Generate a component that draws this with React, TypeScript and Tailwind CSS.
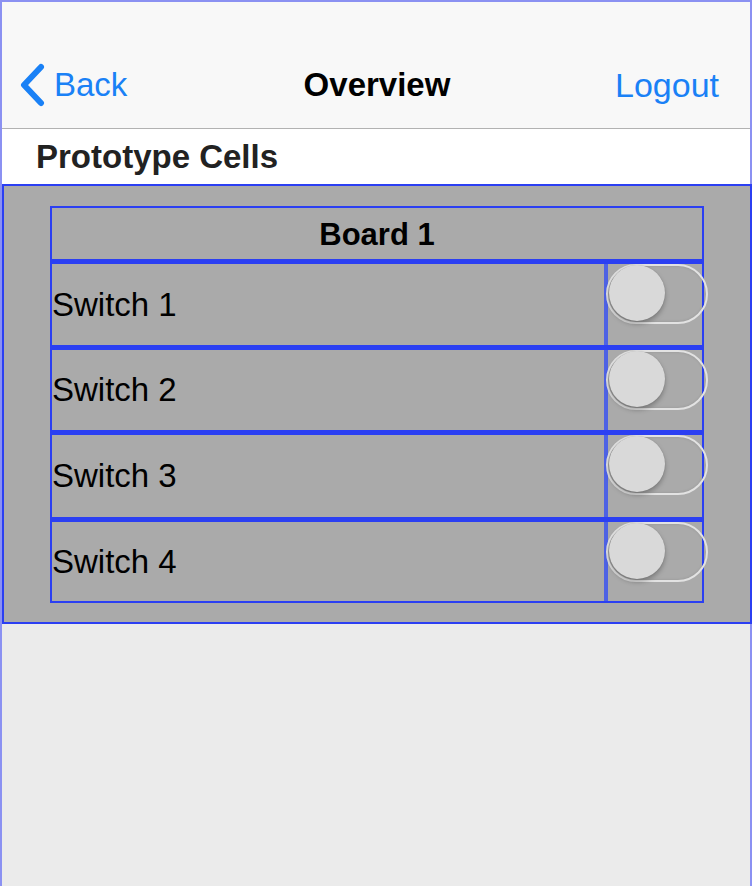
import React from 'react'

const switches = [
  { name: 'Switch 1', h: 'h-[86px]' },
  { name: 'Switch 2', h: 'h-[85px]' },
  { name: 'Switch 3', h: 'h-[87px]' },
  { name: 'Switch 4', h: 'h-[84px]' },
]

function Toggle() {
  return (
    <div className="absolute left-[-2px] top-0 w-[102px] h-[60px] rounded-full border-2 border-[#e2e2e2] shadow-[inset_0_0_3px_rgba(0,0,0,0.12)]">
      <div className="absolute left-[1px] top-[-1px] w-[56px] h-[56px] rounded-full bg-[#d9d9d9] shadow-[0_3px_5px_rgba(0,0,0,0.28),0_0_1px_rgba(0,0,0,0.2)]" />
    </div>
  )
}

export default function App() {
  return (
    <div
      className="w-[752px] min-h-[886px] flex flex-col border-t-2 border-x-2 border-[#8b91f2] bg-[#ebebeb]"
      style={{ fontFamily: '"Liberation Sans", Arial, sans-serif' }}
    >
      {/* nav bar */}
      <header className="bg-[#f8f8f8] pt-[40px] border-b border-[#b2b2b2]">
        <div className="h-[86px] grid grid-cols-[1fr_auto_1fr] items-center pl-[18px] pr-[30px]">
          <button className="justify-self-start flex items-center gap-[8px] text-[#1a81f6] text-[33px]">
            <svg width="26" height="44" viewBox="0 0 26 44" fill="none">
              <path d="M21 4 L4 22 L21 40" stroke="#1a81f6" strokeWidth="6" strokeLinecap="round" strokeLinejoin="round" />
            </svg>
            <span>Back</span>
          </button>
          <h1 className="font-bold text-[33px] text-black ml-[14px]">Overview</h1>
          <button className="justify-self-end text-[#1a81f6] text-[34px] mr-[1px]">Logout</button>
        </div>
      </header>

      <div className="bg-white h-[55px] flex items-center px-[34px]">
        <h2 className="font-bold text-[33px] text-[#222]">Prototype Cells</h2>
      </div>

      {/* prototype panel */}
      <section className="bg-[#aaaaaa] border-2 border-[#2b3ff2] -mr-[2px] px-[46px] pt-[20px] pb-[19px]">
        <div className="border-2 border-[#2b3ff2]">
          <div className="h-[51px] pt-[3px] flex items-center justify-center font-bold text-[31px] text-black">
            Board 1
          </div>
          {switches.map((s) => (
            <div key={s.name} className={'border-t-[5px] border-[#2b3ff2] flex ' + s.h}>
              <div className="flex-1 flex items-center text-[33px] text-black">{s.name}</div>
              <div className="relative w-[98px] border-l-4 border-[#4e62e4]">
                <Toggle />
              </div>
            </div>
          ))}
        </div>
      </section>

      <div className="flex-1 bg-[#ebebeb]" />
    </div>
  )
}
